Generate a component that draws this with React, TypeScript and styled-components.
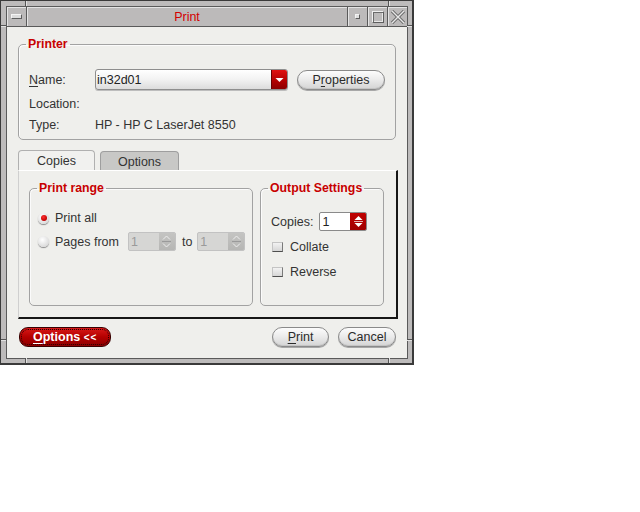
import React from "react";
import styled, { createGlobalStyle } from "styled-components";

const Global = createGlobalStyle`
  html, body { margin: 0; padding: 0; background: #ffffff; }
  body { font-family: "Liberation Sans", Arial, Helvetica, sans-serif; font-size: 12.5px; color: #333333; }
  * { box-sizing: border-box; }
`;

const Window = styled.div`
  position: relative;
  width: 414px;
  height: 365px;
  background: #bdbbbb;
  border: 1px solid #3a3a3a;
  border-right-width: 2px;
  border-bottom-width: 2px;
  padding: 5px 4px 4px 5px;
`;

const Notch = styled.span<{ $v?: boolean; $top?: number; $left?: number; $right?: number; $bottom?: number }>`
  position: absolute;
  background: #555555;
  width: ${(p) => (p.$v ? "1px" : "5px")};
  height: ${(p) => (p.$v ? "5px" : "1px")};
  box-shadow: ${(p) => (p.$v ? "1px 0 0 #e2e2e2" : "0 1px 0 #e2e2e2")};
  ${(p) => (p.$top !== undefined ? `top: ${p.$top}px;` : "")}
  ${(p) => (p.$left !== undefined ? `left: ${p.$left}px;` : "")}
  ${(p) => (p.$right !== undefined ? `right: ${p.$right}px;` : "")}
  ${(p) => (p.$bottom !== undefined ? `bottom: ${p.$bottom}px;` : "")}
`;

const Frame = styled.div`
  height: 100%;
  border: 1px solid #5a5a5a;
  display: flex;
  flex-direction: column;
`;

const TitleBar = styled.div`
  height: 20px;
  display: flex;
  border-bottom: 1px solid #5a5a5a;
  background: #bcbaba;
`;

const TitleButton = styled.div<{ $side: "left" | "right" }>`
  width: 20px;
  display: flex;
  align-items: center;
  justify-content: center;
  ${(p) => (p.$side === "left" ? "border-right: 1px solid #5a5a5a;" : "border-left: 1px solid #5a5a5a;")}
  box-shadow: inset 1px 1px 0 #e4e4e4;
`;

const MenuBar = styled.span`
  width: 11px;
  height: 5px;
  background: #dcdcdc;
  border: 1px solid #5e5e5e;
  border-top-color: #f4f4f4;
  border-left-color: #f4f4f4;
`;

const TinySquare = styled.span`
  width: 5px;
  height: 5px;
  background: #e0e0e0;
  border: 1px solid #5e5e5e;
  border-top-color: #f4f4f4;
  border-left-color: #f4f4f4;
`;

const BigSquare = styled.span`
  width: 12px;
  height: 12px;
  border: 1px solid #f0f0f0;
  border-right-color: #5e5e5e;
  border-bottom-color: #5e5e5e;
  box-shadow: inset 1px 1px 0 #6a6a6a, inset -1px -1px 0 #e8e8e8;
`;

const Title = styled.div`
  flex: 1;
  display: flex;
  align-items: center;
  justify-content: center;
  color: #d40000;
  font-size: 12.5px;
  box-shadow: inset 1px 1px 0 #e4e4e4;
`;

const Client = styled.div`
  flex: 1;
  background: #efefec;
  padding: 10px 11px 10px 11px;
  display: flex;
  flex-direction: column;
`;

const Group = styled.fieldset`
  margin: 0;
  padding: 0;
  min-width: 0;
  border: 1px solid #a2a2a2;
  border-radius: 5px;
  box-shadow: inset 1px 1px 0 #fbfbfb;
`;

const Legend = styled.legend`
  margin-left: 7px;
  padding: 0 2px;
  color: #c80000;
  font-weight: bold;
  font-size: 12.3px;
  line-height: 14px;
`;

const PrinterBody = styled.div`
  display: grid;
  grid-template-columns: 66px 193px 1fr;
  grid-template-rows: 21px 14px 14px;
  row-gap: 7px;
  align-items: center;
  padding: 18px 10px 7px 10px;
  line-height: 14px;
  white-space: nowrap;
`;

const FieldLabel = styled.span<{ $span?: boolean }>`
  ${(p) => (p.$span ? "grid-column: 2 / 4;" : "")}
`;

const ButtonCell = styled.div`
  display: flex;
  justify-content: flex-end;
`;

const U = styled.span`
  text-decoration: underline;
  text-underline-offset: 2px;
`;

const Combo = styled.div`
  height: 21px;
  display: flex;
  border: 1px solid #8e8e8e;
  border-radius: 3px;
  background: linear-gradient(#ffffff, #f2f2f2 50%, #dcdcdc);
  box-shadow: 0 1px 0 #bdbdbd;
  overflow: hidden;
`;

const ComboText = styled.span`
  flex: 1;
  padding-left: 1px;
  display: flex;
  align-items: center;
  color: #222;
`;

const ComboArrow = styled.span`
  width: 16px;
  display: flex;
  align-items: center;
  justify-content: center;
  background: linear-gradient(#e01010, #b00000 60%, #8c0000);
  border-left: 1px solid #6a0000;
`;

const PillButton = styled.button<{ $w: number }>`
  width: ${(p) => p.$w}px;
  height: 20px;
  padding: 0;
  font-family: inherit;
  font-size: 12.5px;
  color: #2a2a2a;
  border: 1px solid #8a8a8a;
  border-radius: 10px;
  background: linear-gradient(#fcfcfc, #ececec 45%, #d4d4d4);
  box-shadow: 0 1px 0 #a8a8a8, inset 0 -1px 0 #c4c4c4;
  line-height: 16px;
`;

const Tabs = styled.div`
  margin-top: 10px;
  height: 20px;
  display: flex;
  align-items: flex-end;
  gap: 5px;
`;

const Tab = styled.div<{ $active?: boolean }>`
  width: ${(p) => (p.$active ? 77 : 79)}px;
  height: ${(p) => (p.$active ? 20 : 19)}px;
  display: flex;
  align-items: center;
  justify-content: center;
  border: 1px solid ${(p) => (p.$active ? "#b0b0b0" : "#9e9e9e")};
  border-bottom: none;
  border-radius: 4px 4px 0 0;
  background: ${(p) => (p.$active ? "#f1f1ef" : "#c8c8c6")};
  color: #333;
  padding-top: 1px;
`;

const Panel = styled.div`
  height: 149px;
  margin-right: -2px;
  display: flex;
  gap: 7px;
  padding: 10px 12px 11px 10px;
  border-top: 1px solid #ffffff;
  border-left: 1px solid #cfcfcf;
  border-right: 2px solid #161616;
  border-bottom: 2px solid #161616;
`;

const RangeGroup = styled(Group)`
  width: 224px;
  flex-shrink: 0;
`;

const OutputGroup = styled(Group)`
  width: 124px;
  flex-shrink: 0;
`;

const RangeBody = styled.div`
  padding: 14px 0 0 8px;
  display: flex;
  flex-direction: column;
  gap: 5px;
`;

const OutputBody = styled.div`
  padding: 17px 0 0 10px;
  display: flex;
  flex-direction: column;
  gap: 7px;
`;

const Row = styled.div<{ $h: number }>`
  height: ${(p) => p.$h}px;
  display: flex;
  align-items: center;
  white-space: nowrap;
  & > * { flex-shrink: 0; }
`;

const Radio = styled.span<{ $on?: boolean }>`
  width: 11px;
  height: 11px;
  border-radius: 50%;
  margin-right: 6px;
  display: flex;
  align-items: center;
  justify-content: center;
  background: radial-gradient(circle at 40% 35%, #ffffff, #dcdcdc 70%, #b8b8b8);
  box-shadow: 0 1px 1px #8a8a8a;
  &::after {
    content: "";
    display: ${(p) => (p.$on ? "block" : "none")};
    width: 6px;
    height: 6px;
    border-radius: 50%;
    background: radial-gradient(circle at 40% 35%, #ff3030, #c00000 70%);
  }
`;

const Check = styled.span`
  width: 11px;
  height: 10px;
  margin: 0 7px 0 1px;
  background: linear-gradient(#f2f2f2, #d6d6d6);
  border: 1px solid #c4c4c4;
  border-bottom-color: #4e4e4e;
  border-right-color: #7a7a7a;
`;

const Text = styled.span<{ $ml?: number; $mr?: number }>`
  margin-left: ${(p) => p.$ml ?? 0}px;
  margin-right: ${(p) => p.$mr ?? 0}px;
  color: #333;
`;

const Spin = styled.div<{ $disabled?: boolean }>`
  width: 48px;
  height: 19px;
  display: flex;
  border: 1px solid ${(p) => (p.$disabled ? "#c2c2c2" : "#8a8a8a")};
  border-radius: 2px;
  background: ${(p) => (p.$disabled ? "#d6d6d4" : "#ffffff")};
  overflow: hidden;
`;

const SpinValue = styled.span<{ $disabled?: boolean }>`
  flex: 1;
  display: flex;
  align-items: center;
  padding-left: 2px;
  color: ${(p) => (p.$disabled ? "#9a9a9a" : "#222")};
`;

const SpinArrows = styled.span<{ $disabled?: boolean }>`
  width: 16px;
  display: flex;
  align-items: center;
  justify-content: center;
  background: ${(p) =>
    p.$disabled ? "linear-gradient(#c4c4c2, #b6b6b4)" : "linear-gradient(#c00000, #a00000)"};
`;

const ButtonRow = styled.div`
  margin-top: 8px;
  height: 20px;
  display: flex;
  align-items: center;
  gap: 9px;
`;

const Spacer = styled.div`
  flex: 1;
`;

const RedButton = styled.button`
  width: 92px;
  height: 20px;
  margin-left: 1px;
  padding: 0 0 0 13px;
  text-align: left;
  font-family: inherit;
  font-size: 12.5px;
  font-weight: bold;
  color: #ffffff;
  border: 1px solid #3a0000;
  border-radius: 9px;
  background: linear-gradient(#d81818, #b40000 50%, #8e0000);
  outline: 1px dotted #2a0000;
  outline-offset: -3px;
  line-height: 16px;
`;

const Small = styled.span`
  font-size: 10px;
  letter-spacing: 1px;
`;

const DownTri = () => (
  <svg width="9" height="6" viewBox="0 0 9 6">
    <path d="M0.5 1 L8.5 1 L4.5 5 Z" fill="#ffffff" />
  </svg>
);

const SpinIcon = ({ disabled }: { disabled?: boolean }) => (
  <svg width="11" height="15" viewBox="0 0 11 15">
    {disabled ? (
      <>
        <path d="M2 5.5 L5.5 2 L9 5.5" fill="none" stroke="#eeeeee" strokeWidth="1" />
        <line x1="1" y1="7.5" x2="10" y2="7.5" stroke="#9a9a9a" />
        <path d="M2 9.5 L5.5 13 L9 9.5" fill="none" stroke="#eeeeee" strokeWidth="1" />
      </>
    ) : (
      <>
        <path d="M1.5 6 L5.5 2 L9.5 6 Z" fill="#ffffff" />
        <line x1="1" y1="7.5" x2="10" y2="7.5" stroke="#e6b0b0" />
        <path d="M1.5 9 L5.5 13 L9.5 9 Z" fill="#ffffff" />
      </>
    )}
  </svg>
);

const CloseIcon = () => (
  <svg width="16" height="14" viewBox="0 0 16 14">
    <path d="M2 1 L14 13 M14 1 L2 13" stroke="#6a6a6a" strokeWidth="3.2" fill="none" />
    <path d="M2 1 L14 13 M14 1 L2 13" stroke="#e8e8e8" strokeWidth="1.4" fill="none" />
  </svg>
);

export default function App() {
  return (
    <>
      <Global />
      <Window>
        <Notch $v $top={0} $left={24} />
        <Notch $v $top={0} $left={387} />
        <Notch $v $bottom={0} $left={24} />
        <Notch $v $bottom={0} $left={387} />
        <Notch $top={24} $left={0} />
        <Notch $top={24} $right={0} />
        <Notch $top={338} $left={0} />
        <Notch $top={338} $right={0} />
        <Frame>
          <TitleBar>
            <TitleButton $side="left">
              <MenuBar />
            </TitleButton>
            <Title>Print</Title>
            <TitleButton $side="right">
              <TinySquare />
            </TitleButton>
            <TitleButton $side="right">
              <BigSquare />
            </TitleButton>
            <TitleButton $side="right">
              <CloseIcon />
            </TitleButton>
          </TitleBar>
          <Client>
            <Group>
              <Legend>Printer</Legend>
              <PrinterBody>
                <FieldLabel>
                  <U>N</U>ame:
                </FieldLabel>
                <Combo>
                  <ComboText>in32d01</ComboText>
                  <ComboArrow>
                    <DownTri />
                  </ComboArrow>
                </Combo>
                <ButtonCell>
                  <PillButton $w={88}>
                    P<U>r</U>operties
                  </PillButton>
                </ButtonCell>
                <FieldLabel>Location:</FieldLabel>
                <span />
                <span />
                <FieldLabel>Type:</FieldLabel>
                <FieldLabel $span>HP - HP C LaserJet 8550</FieldLabel>
              </PrinterBody>
            </Group>
            <Tabs>
              <Tab $active>Copies</Tab>
              <Tab>Options</Tab>
            </Tabs>
            <Panel>
              <RangeGroup>
                <Legend>Print range</Legend>
                <RangeBody>
                  <Row $h={18}>
                    <Radio $on />
                    <Text>Print all</Text>
                  </Row>
                  <Row $h={19}>
                    <Radio />
                    <Text $mr={9}>Pages from</Text>
                    <Spin $disabled>
                      <SpinValue $disabled>1</SpinValue>
                      <SpinArrows $disabled>
                        <SpinIcon disabled />
                      </SpinArrows>
                    </Spin>
                    <Text $ml={6} $mr={5}>to</Text>
                    <Spin $disabled>
                      <SpinValue $disabled>1</SpinValue>
                      <SpinArrows $disabled>
                        <SpinIcon disabled />
                      </SpinArrows>
                    </Spin>
                  </Row>
                </RangeBody>
              </RangeGroup>
              <OutputGroup>
                <Legend>Output Settings</Legend>
                <OutputBody>
                  <Row $h={19}>
                    <Text $mr={6}>Copies:</Text>
                    <Spin>
                      <SpinValue>1</SpinValue>
                      <SpinArrows>
                        <SpinIcon />
                      </SpinArrows>
                    </Spin>
                  </Row>
                  <Row $h={18}>
                    <Check />
                    <Text>Collate</Text>
                  </Row>
                  <Row $h={18}>
                    <Check />
                    <Text>Reverse</Text>
                  </Row>
                </OutputBody>
              </OutputGroup>
            </Panel>
            <ButtonRow>
              <RedButton>
                <U>O</U>ptions <Small>&lt;&lt;</Small>
              </RedButton>
              <Spacer />
              <PillButton $w={57}>
                <U>P</U>rint
              </PillButton>
              <PillButton $w={58}>Cancel</PillButton>
            </ButtonRow>
          </Client>
        </Frame>
      </Window>
    </>
  );
}
